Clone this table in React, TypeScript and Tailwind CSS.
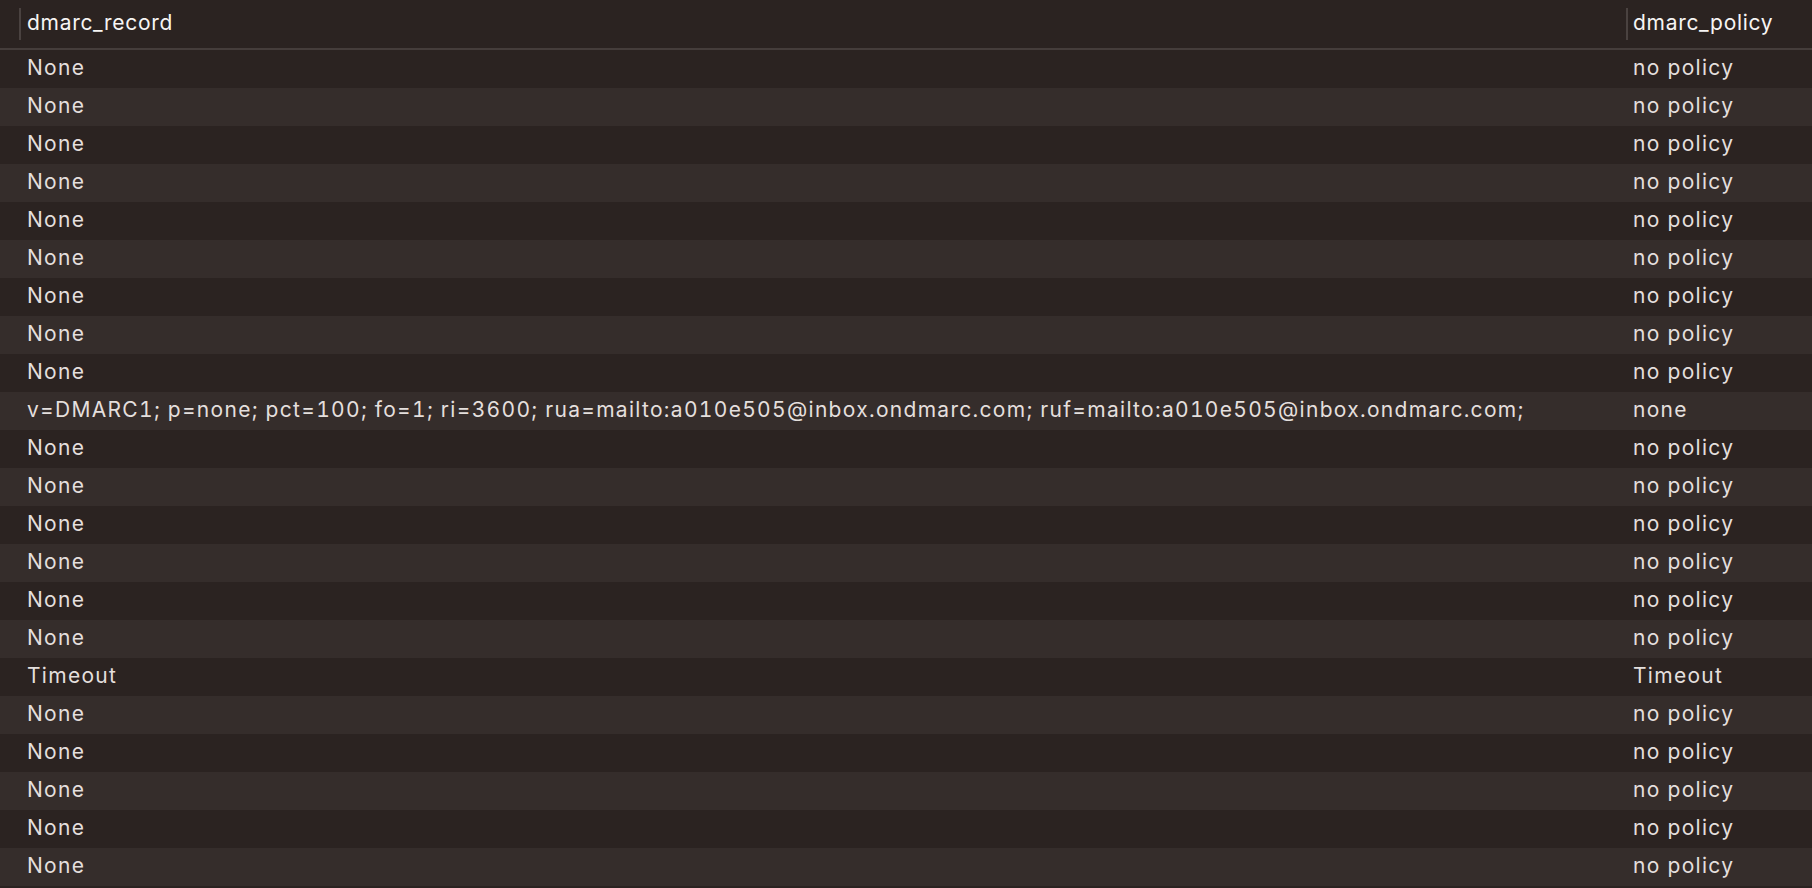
import React from "react";

type Row = { record: string; policy: string };

const dmarc =
  "v=DMARC1; p=none; pct=100; fo=1; ri=3600; rua=mailto:a010e505@inbox.ondmarc.com; ruf=mailto:a010e505@inbox.ondmarc.com;";

const rows: Row[] = [
  ...Array(9).fill({ record: "None", policy: "no policy" }),
  { record: dmarc, policy: "none" },
  ...Array(6).fill({ record: "None", policy: "no policy" }),
  { record: "Timeout", policy: "Timeout" },
  ...Array(5).fill({ record: "None", policy: "no policy" }),
];

const App = () => {
  return (
    <div
      className="w-full h-screen overflow-hidden bg-[#2b2321] text-[#e4dfdd] text-[21px] tracking-[1.3px] tabular-nums"
      style={{ fontFamily: "Inter, 'Liberation Sans', sans-serif" }}
    >
      {/* Header */}
      <div className="flex h-[50px] border-b-2 border-[#453d3b] pl-[19px] text-[#f7f5f4] tracking-[0.7px]">
        <div className="flex-1 flex items-center">
          <div className="w-[2px] h-[32px] bg-[#4a4240]" />
          <span className="pl-[6px] pb-[3px]">dmarc_record</span>
        </div>
        <div className="w-[186px] flex items-center">
          <div className="w-[2px] h-[32px] bg-[#4a4240]" />
          <span className="pl-[5px] pb-[3px]">dmarc_policy</span>
        </div>
      </div>

      {/* Rows */}
      {rows.map((r, i) => (
        <div
          key={i}
          className={
            "flex h-[38px] items-center " +
            (i % 2 === 0 ? "bg-[#2b2321]" : "bg-[#352d2b]")
          }
        >
          <div className="flex-1 pl-[27px] pb-[2px] whitespace-nowrap">{r.record}</div>
          <div className="w-[186px] pl-[7px] pb-[2px] whitespace-nowrap">{r.policy}</div>
        </div>
      ))}
    </div>
  );
};

export default App;
